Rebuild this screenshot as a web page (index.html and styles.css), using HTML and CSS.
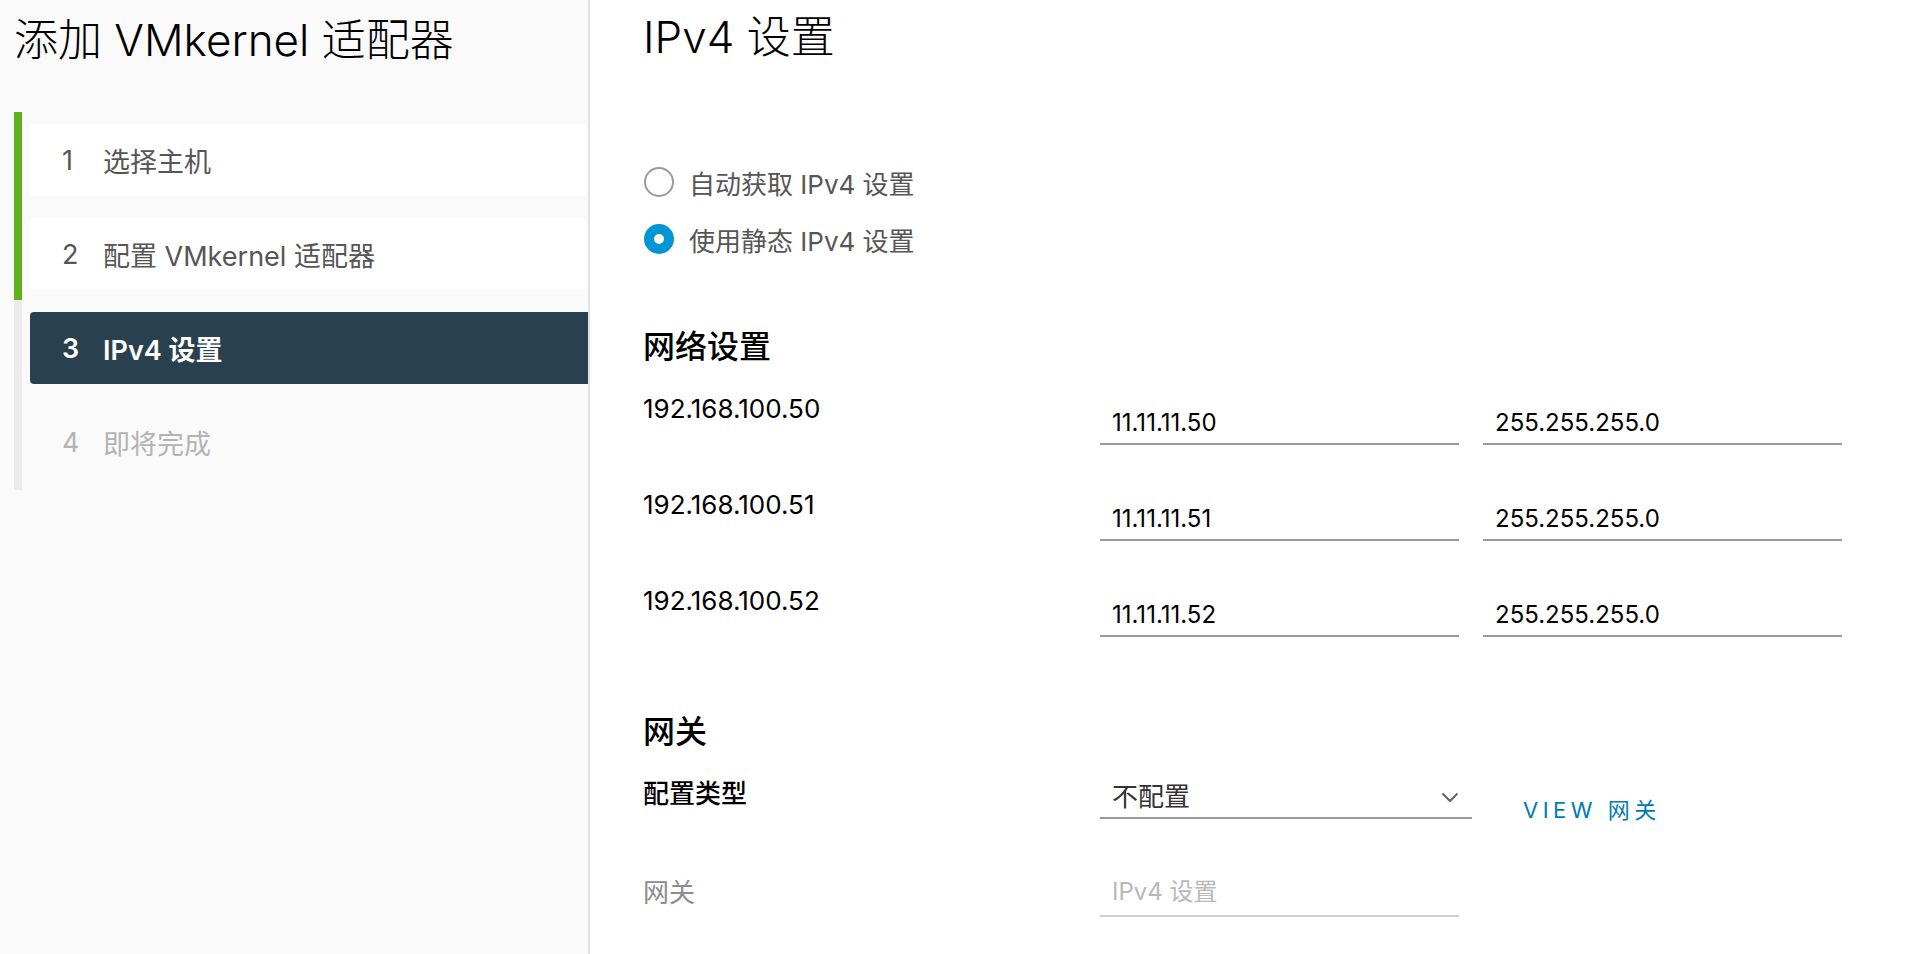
FILE: index.html
```html
<!DOCTYPE html>
<html lang="zh-CN">
<head>
<meta charset="utf-8">
<title>添加 VMkernel 适配器</title>
<link rel="stylesheet" href="styles.css">
</head>
<body>
<div class="app">
  <aside class="sidebar">
    <h1 class="wiz-title">添加 VMkernel 适配器</h1>
    <div class="progress">
      <div class="track"><div class="track-done"></div></div>
      <ol class="steps">
        <li class="step done"><span class="num">1</span>选择主机</li>
        <li class="step done"><span class="num">2</span>配置 VMkernel 适配器</li>
        <li class="step active"><span class="num">3</span>IPv4 设置</li>
        <li class="step todo"><span class="num">4</span>即将完成</li>
      </ol>
    </div>
  </aside>
  <main class="content">
    <h2 class="page-title">IPv4 设置</h2>
    <div class="radios">
      <div class="radio"><span class="circle"></span><span>自动获取 IPv4 设置</span></div>
      <div class="radio"><span class="circle checked"></span><span>使用静态 IPv4 设置</span></div>
    </div>
    <h3 class="section">网络设置</h3>
    <div class="ip-rows">
      <div class="ip-row">
        <div class="ip-label">192.168.100.50</div>
        <div class="field">11.11.11.50</div>
        <div class="field">255.255.255.0</div>
      </div>
      <div class="ip-row">
        <div class="ip-label">192.168.100.51</div>
        <div class="field">11.11.11.51</div>
        <div class="field">255.255.255.0</div>
      </div>
      <div class="ip-row">
        <div class="ip-label">192.168.100.52</div>
        <div class="field">11.11.11.52</div>
        <div class="field">255.255.255.0</div>
      </div>
    </div>
    <h3 class="section gw">网关</h3>
    <div class="form-row type-row">
      <div class="form-label">配置类型</div>
      <div class="select"><span class="select-value">不配置</span>
        <svg class="chev" width="18" height="11" viewBox="0 0 18 11"><path d="M1.5 1.5 L9 9 L16.5 1.5" fill="none" stroke="#666" stroke-width="2"/></svg>
      </div>
      <a class="link">VIEW 网关</a>
    </div>
    <div class="form-row gw-row">
      <div class="form-label muted">网关</div>
      <div class="field placeholder">IPv4 设置</div>
    </div>
  </main>
</div>
</body>
</html>
```

FILE: styles.css
```css
html, body {
  margin: 0;
  padding: 0;
  height: 100%;
  overflow: hidden;
}

body {
  font-family: "Inter", "Noto Sans CJK SC", sans-serif;
  color: #000;
  background: #fff;
}

.app {
  display: flex;
  height: 954px;
}

/* ---------- sidebar ---------- */
.sidebar {
  width: 590px;
  flex: none;
  box-sizing: border-box;
  background: #fafafa;
  border-right: 2px solid #e3e3e3;
}

.wiz-title {
  margin: 0;
  padding: 14px 0 0 14px;
  font-size: 44px;
  line-height: 52px;
  font-weight: 300;
  color: #000;
  white-space: nowrap;
}

.progress {
  display: flex;
  margin: 46px 0 0 14px;
}

.track {
  width: 8px;
  flex: none;
  background: #ebebeb;
}

.track-done {
  height: 188px;
  background: #62b01e;
}

.steps {
  list-style: none;
  margin: 0 0 0 8px;
  padding: 12px 0;
  flex: 1;
  display: flex;
  flex-direction: column;
  gap: 22px;
}

.step {
  height: 72px;
  display: flex;
  align-items: center;
  padding-left: 32px;
  font-size: 27px;
  font-weight: 400;
  color: #565656;
  border-radius: 4px;
  white-space: nowrap;
}

.num {
  width: 41px;
  flex: none;
}

.step.done {
  background: #fff;
  margin-right: 2px;
}

.step.active {
  background: #29414e;
  color: #fff;
  font-weight: 600;
  border-radius: 4px 0 0 4px;
}

.step.todo {
  color: #b3b3b3;
}

/* ---------- content ---------- */
.content {
  flex: 1;
  padding: 11px 0 0 53px;
  background: #fff;
}

.page-title {
  margin: 0;
  font-size: 44px;
  line-height: 52px;
  font-weight: 300;
  color: #000;
}

.radios {
  margin-top: 99px;
  display: flex;
  flex-direction: column;
  gap: 17px;
}

.radio {
  display: flex;
  align-items: center;
  height: 40px;
  gap: 15px;
  font-size: 26px;
  color: #565656;
}

.circle {
  width: 30px;
  height: 30px;
  margin-left: 1px;
  box-sizing: border-box;
  border-radius: 50%;
  border: 2px solid #9a9a9a;
  background: #fff;
}

.circle.checked {
  border: 10px solid #0095d3;
}

.section {
  margin: 68px 0 0;
  font-size: 32px;
  line-height: 40px;
  font-weight: 500;
  color: #000;
}

.ip-rows {
  margin-top: 26px;
  display: flex;
  flex-direction: column;
  gap: 44px;
}

.ip-row {
  display: flex;
  align-items: flex-start;
}

.ip-label {
  width: 457px;
  flex: none;
  font-size: 26px;
  line-height: 32px;
  color: #000;
}

.field {
  width: 359px;
  height: 42px;
  flex: none;
  box-sizing: border-box;
  margin-top: 10px;
  padding-left: 12px;
  border-bottom: 2px solid #9a9a9a;
  font-size: 24px;
  line-height: 39px;
  color: #000;
}

.field + .field {
  margin-left: 24px;
}

.section.gw {
  margin-top: 75px;
}

.form-row {
  display: flex;
  align-items: flex-start;
}

.type-row {
  margin-top: 25px;
}

.gw-row {
  margin-top: 54px;
}

.form-label {
  width: 457px;
  flex: none;
  font-size: 26px;
  line-height: 34px;
  font-weight: 500;
  color: #000;
}

.form-label.muted {
  color: #8c8c8c;
  font-weight: 400;
}

.select {
  width: 372px;
  height: 42px;
  flex: none;
  box-sizing: border-box;
  padding: 0 13px 0 12px;
  display: flex;
  align-items: center;
  justify-content: space-between;
  border-bottom: 2px solid #9a9a9a;
  font-size: 26px;
  color: #333;
}

.select-value {
  margin-bottom: 6px;
}

.chev {
  display: block;
}

.link {
  margin: 21px 0 0 51px;
  font-size: 22px;
  line-height: 24px;
  letter-spacing: 4.5px;
  color: #0079b8;
  white-space: nowrap;
}

.gw-row .field {
  margin-top: -1px;
  line-height: 34px;
}

.field.placeholder {
  color: #b8b8b8;
  border-bottom-color: #cfcfcf;
}
```
